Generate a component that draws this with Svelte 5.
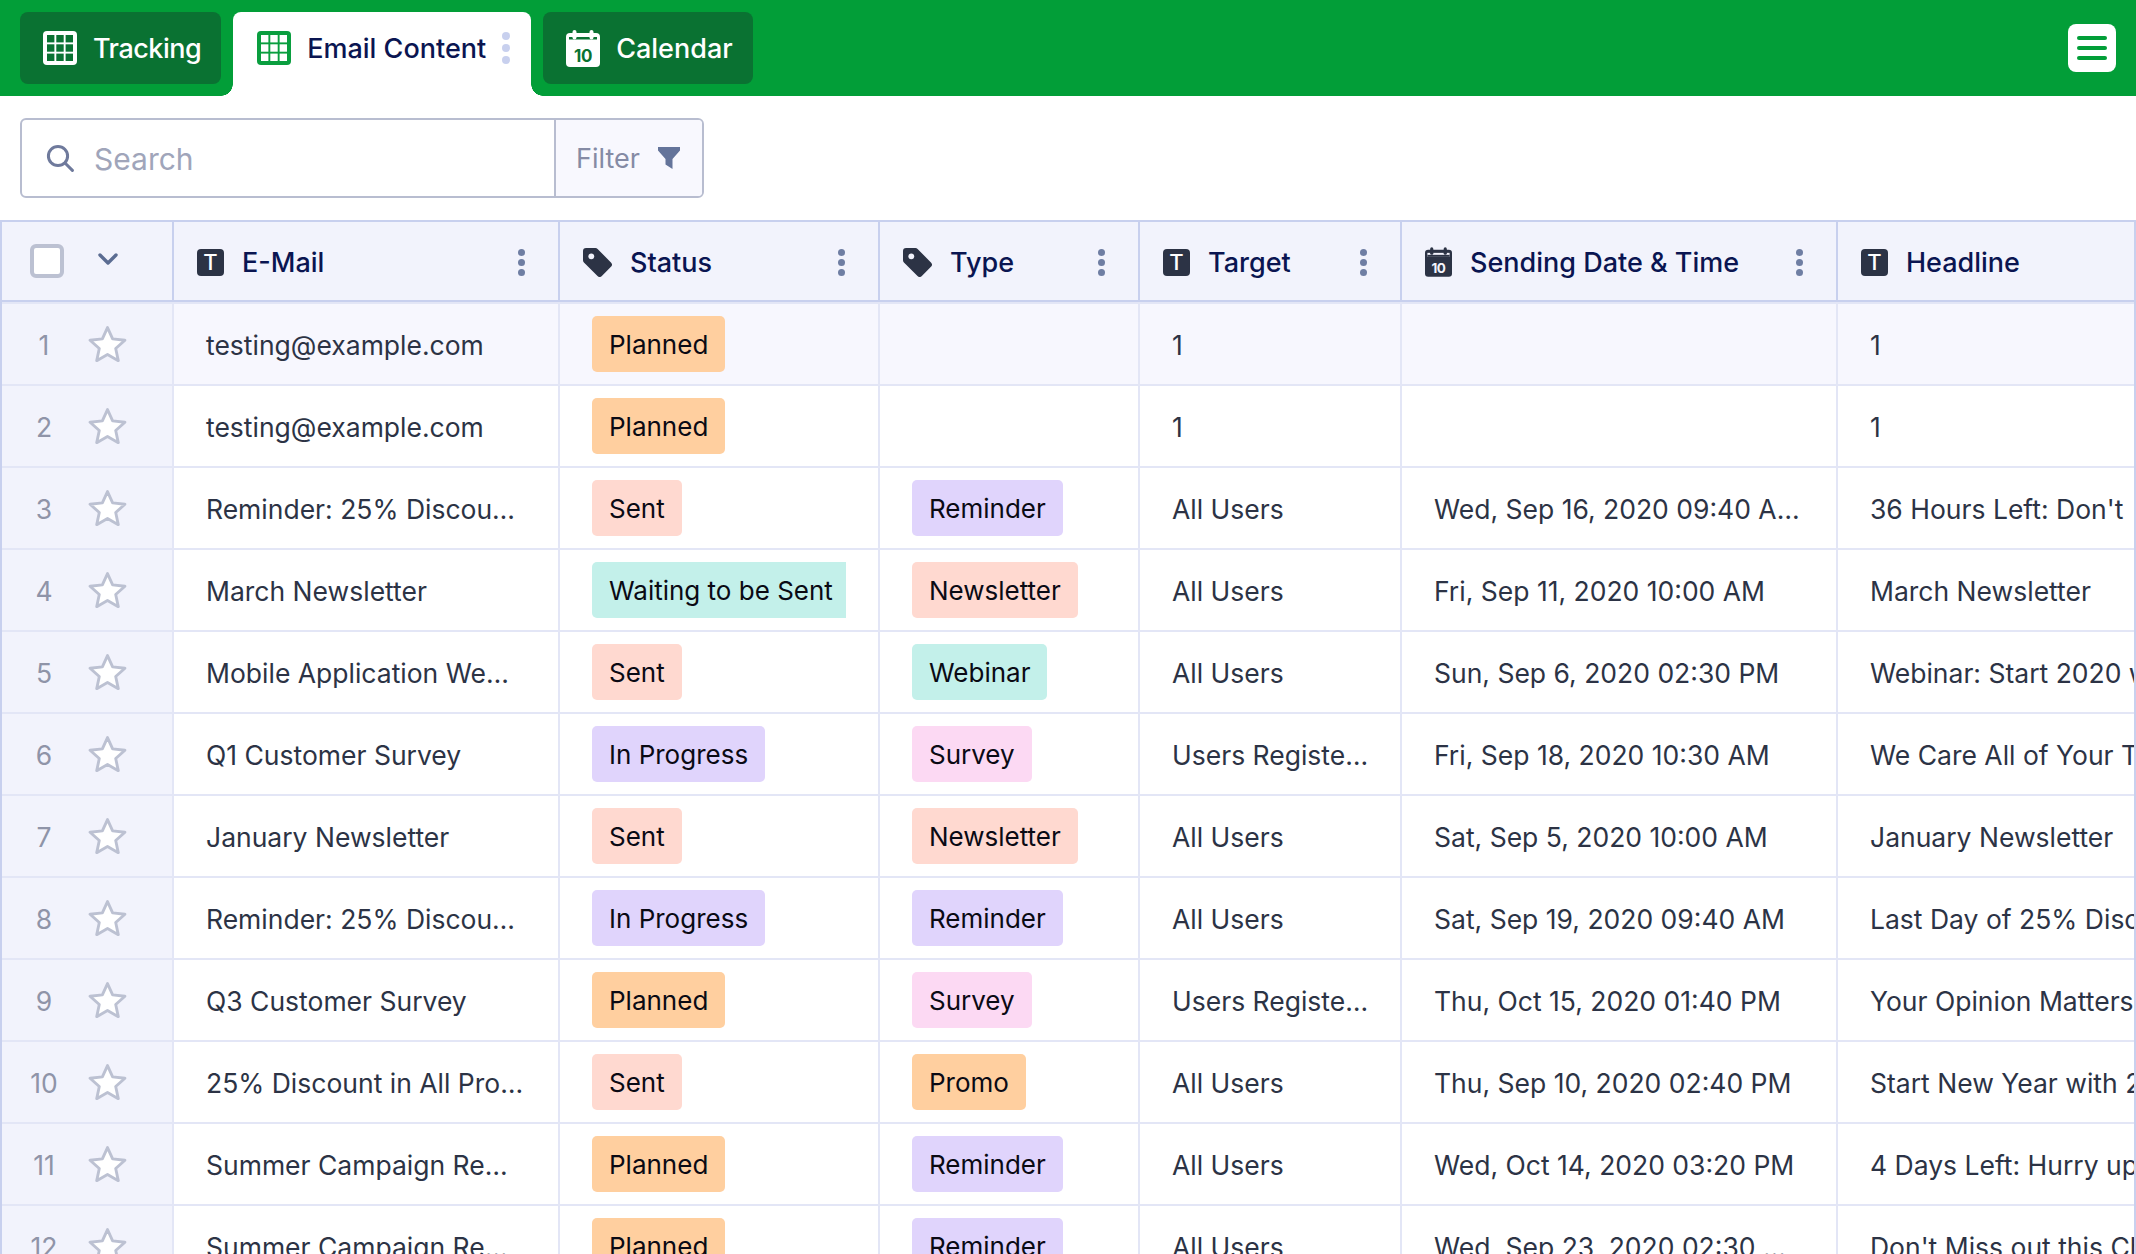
<script>
  const tone = {
    Planned: "orange",
    Promo: "orange",
    Sent: "salmon",
    Newsletter: "salmon",
    "Waiting to be Sent": "teal",
    Webinar: "teal",
    "In Progress": "violet",
    Reminder: "violet",
    Survey: "pink",
  };

  const columns = [
    { label: "E-Mail", icon: "text", menu: true },
    { label: "Status", icon: "tag", menu: true },
    { label: "Type", icon: "tag", menu: true },
    { label: "Target", icon: "text", menu: true },
    { label: "Sending Date & Time", icon: "date", menu: true },
    { label: "Headline", icon: "text", menu: false },
  ];

  const rows = [
    ["testing@example.com", "Planned", "", "1", "", "1"],
    ["testing@example.com", "Planned", "", "1", "", "1"],
    ["Reminder: 25% Discou…", "Sent", "Reminder", "All Users", "Wed, Sep 16, 2020 09:40 A…", "36 Hours Left: Don't"],
    ["March Newsletter", "Waiting to be Sent", "Newsletter", "All Users", "Fri, Sep 11, 2020 10:00 AM", "March Newsletter"],
    ["Mobile Application We…", "Sent", "Webinar", "All Users", "Sun, Sep 6, 2020 02:30 PM", "Webinar: Start 2020 with"],
    ["Q1 Customer Survey", "In Progress", "Survey", "Users Registe…", "Fri, Sep 18, 2020 10:30 AM", "We Care All of Your Time"],
    ["January Newsletter", "Sent", "Newsletter", "All Users", "Sat, Sep 5, 2020 10:00 AM", "January Newsletter"],
    ["Reminder: 25% Discou…", "In Progress", "Reminder", "All Users", "Sat, Sep 19, 2020 09:40 AM", "Last Day of 25% Discount"],
    ["Q3 Customer Survey", "Planned", "Survey", "Users Registe…", "Thu, Oct 15, 2020 01:40 PM", "Your Opinion Matters"],
    ["25% Discount in All Pro…", "Sent", "Promo", "All Users", "Thu, Sep 10, 2020 02:40 PM", "Start New Year with 25%"],
    ["Summer Campaign Re…", "Planned", "Reminder", "All Users", "Wed, Oct 14, 2020 03:20 PM", "4 Days Left: Hurry up"],
    ["Summer Campaign Re…", "Planned", "Reminder", "All Users", "Wed, Sep 23, 2020 02:30 …", "Don't Miss out this Chance"],
  ];
</script>

{#snippet gridIcon(fill, cut)}
  <svg class="tab-icon" viewBox="0 0 34 34" fill={cut}>
    <rect width="34" height="34" rx="4" fill={fill} />
    {#each [4, 13.3, 22.6] as y}
      {#each [4, 13.3, 22.6] as x}
        <rect {x} {y} width="7.4" height="7.4" />
      {/each}
    {/each}
  </svg>
{/snippet}

{#snippet dateIcon(fill, cut, cls)}
  <svg class={cls} viewBox="0 0 34 37">
    <rect y="3" width="34" height="34" rx="4" fill={fill} />
    <rect x="3" y="7" width="28" height="5" fill={cut} />
    <rect x="3" y="9.500" width="28" height="2.500" fill={fill} />
    <rect x="6.500" y="0" width="4" height="9.500" rx="2" fill={fill} />
    <rect x="23.500" y="0" width="4" height="9.500" rx="2" fill={fill} />
    <text x="17" y="32" text-anchor="middle" fill={cut} class="cal-num">10</text>
  </svg>
{/snippet}

{#snippet dots()}
  <span class="dots"><i></i><i></i><i></i></span>
{/snippet}

<div class="page">
  <nav class="topbar">
    <div class="tab">
      {@render gridIcon("#fff", "#0a7232")}
      <span class="tight">Tracking</span>
    </div>
    <div class="tab active">
      {@render gridIcon("#0a9e3f", "#fff")}
      <span>Email Content</span>
      <span class="tab-dots"><i></i><i></i><i></i></span>
    </div>
    <div class="tab cal">
      {@render dateIcon("#fff", "#0a7232", "tab-icon cal-icon")}
      <span>Calendar</span>
    </div>
    <button class="burger" aria-label="Menu"><i></i><i></i><i></i></button>
  </nav>

  <div class="toolbar">
    <div class="searchbox">
      <label class="search">
        <svg class="search-icon" viewBox="0 0 28 28" fill="none" stroke="#6f7a9c" stroke-width="3" stroke-linecap="round">
          <circle cx="12" cy="12" r="9.600" />
          <path d="M19 19l7.400 7.400" />
        </svg>
        <span>Search</span>
      </label>
      <div class="filter">
        <span>Filter</span>
        <svg viewBox="0 0 22 22" width="22" height="22" fill="#64749a">
          <path d="M0 0h22v3.500l-7.500 8.500v10l-7-4.500v-5.500l-7.500-8.500z" />
        </svg>
      </div>
    </div>
  </div>

  <div class="sheet">
    <div class="row head">
      <div class="cell lead">
        <span class="check"></span>
        <svg class="chev" viewBox="0 0 20 12" fill="none" stroke="#5b6c92" stroke-width="3.400" stroke-linecap="round" stroke-linejoin="round">
          <path d="M2 2l8 8 8-8" />
        </svg>
      </div>
      {#each columns as col}
        <div class="cell">
          {#if col.icon === "text"}
            <svg class="col-icon" viewBox="0 0 27 27">
              <rect width="27" height="27" rx="4" fill="#2c3345" />
              <text x="13.500" y="21" text-anchor="middle" class="t-glyph">T</text>
            </svg>
          {:else if col.icon === "tag"}
            <svg class="col-icon tag-icon" viewBox="0 0 28 28">
              <path fill="#2c3345" d="M3 0h9a3 3 0 0 1 2.100.9L27 14a3 3 0 0 1 0 4.200L18.200 27a3 3 0 0 1-4.200 0L.9 14a3 3 0 0 1-.9-2.100V3a3 3 0 0 1 3-3z" />
              <circle cx="8" cy="8" r="2.800" fill="#f2f3fc" />
            </svg>
          {:else}
            {@render dateIcon("#2c3345", "#f2f3fc", "col-icon date-icon")}
          {/if}
          <span class="label">{col.label}</span>
          {#if col.menu}
            {@render dots()}
          {/if}
        </div>
      {/each}
    </div>

    <div class="body">
      {#each rows as r, i}
        <div class="row" class:first={i === 0}>
          <div class="cell lead">
            <span class="num">{i + 1}</span>
            <svg class="star" viewBox="0 0 38 36" fill="#fff" stroke="#bcc1d2" stroke-width="2.800" stroke-linejoin="round">
              <path d="M19 2.500l5 11 12 1.300-9 8.100 2.500 11.800L19 28.700 8.500 34.700 11 22.900 2 14.800l12-1.300z" />
            </svg>
          </div>
          {#each r as value, c}
            <div class="cell">
              {#if (c === 1 || c === 2) && value}
                <span class="pill-clip"><span class="pill {tone[value]}">{value}</span></span>
              {:else}
                <span class="text">{value}</span>
              {/if}
            </div>
          {/each}
        </div>
      {/each}
    </div>
  </div>
</div>

<style>
  :global(body) {
    margin: 0;
    background: #fff;
  }
  .page {
    height: 100vh;
    overflow: hidden;
    font-family: Inter, "Noto Sans", sans-serif;
    color: #2c3345;
  }
  .topbar {
    display: flex;
    align-items: flex-start;
    gap: 12px;
    height: 96px;
    box-sizing: border-box;
    padding: 12px 20px 0;
    background: #029e38;
  }
  .tab {
    display: flex;
    align-items: center;
    height: 72px;
    box-sizing: border-box;
    padding: 0 20px 0 23px;
    gap: 16px;
    border-radius: 8px;
    background: #0a7232;
    color: #fff;
    font-size: 27px;
    font-weight: 500;
  }
  .tight {
    letter-spacing: -0.5px;
  }
  .tab-icon {
    width: 34px;
    height: 34px;
    flex: none;
  }
  .cal-icon {
    height: 37px;
  }
  .tab.active {
    position: relative;
    height: 84px;
    padding: 0 21px 12px 24px;
    border-radius: 8px 8px 0 0;
    background: #fff;
    color: #0a1551;
  }
  .tab.active::before,
  .tab.active::after {
    content: "";
    position: absolute;
    bottom: 0;
    width: 12px;
    height: 12px;
  }
  .tab.active::before {
    left: -12px;
    background: radial-gradient(circle at 0 0, #029e38 11.500px, #fff 12px);
  }
  .tab.active::after {
    right: -12px;
    background: radial-gradient(circle at 100% 0, #029e38 11.500px, #fff 12px);
  }
  .tab-dots {
    display: flex;
    flex-direction: column;
    gap: 4px;
  }
  .tab-dots i {
    width: 8px;
    height: 8px;
    border-radius: 50%;
    background: #c8d0ee;
  }
  .burger {
    display: flex;
    flex-direction: column;
    justify-content: center;
    align-items: center;
    gap: 6px;
    width: 48px;
    height: 48px;
    margin: 12px 0 0 auto;
    padding: 0;
    border: none;
    border-radius: 8px;
    background: #fff;
  }
  .burger i {
    width: 30px;
    height: 4px;
    border-radius: 2px;
    background: #029e38;
  }
  .toolbar {
    padding: 22px 20px;
  }
  .searchbox {
    display: flex;
    width: 684px;
    height: 80px;
    box-sizing: border-box;
    border: 2px solid #b8bdd0;
    border-radius: 6px;
    overflow: hidden;
  }
  .search {
    display: flex;
    align-items: center;
    flex: 1;
    gap: 20px;
    padding: 2px 0 0 24px;
    color: #a0a5ba;
    font-size: 30px;
  }
  .search-icon {
    width: 28px;
    height: 28px;
    margin-top: -2px;
  }
  .filter {
    display: flex;
    align-items: center;
    gap: 18px;
    width: 148px;
    box-sizing: border-box;
    padding-left: 20px;
    border-left: 2px solid #b8bdd0;
    background: #f8f8fe;
    color: #858ba5;
    font-size: 27px;
  }
  .sheet {
    border-top: 2px solid #c8d0ee;
    border-left: 2px solid #c8d0ee;
    border-right: 2px solid #c8d0ee;
  }
  .row {
    display: grid;
    grid-template-columns: 172px 386px 320px 260px 262px 436px 1fr;
    height: 82px;
    box-sizing: border-box;
    border-bottom: 2px solid #e3e6f6;
  }
  .head {
    height: 80px;
    border-bottom: 2px solid #c8d0ee;
    background: #f2f3fc;
  }
  .body {
    border-top: 2px solid #e3e6f6;
  }
  .first {
    background: #f7f7fe;
  }
  .cell {
    display: flex;
    align-items: center;
    box-sizing: border-box;
    min-width: 0;
    padding: 0 32px;
    border-right: 2px solid #e3e6f6;
    overflow: hidden;
    white-space: nowrap;
    font-size: 26.500px;
  }
  .cell:last-child {
    border-right: none;
    padding-right: 0;
  }
  .text {
    padding-top: 2px;
  }
  .head .cell {
    padding: 2px 33px 0 23px;
    border-right-color: #c8d0ee;
  }
  .lead {
    padding: 0;
    background: #f2f3fc;
  }
  .head .lead {
    padding: 0 0 0 28px;
  }
  .check {
    width: 34px;
    height: 34px;
    box-sizing: border-box;
    border: 4px solid #bcc1d2;
    border-radius: 6px;
    background: #fff;
    flex: none;
  }
  .chev {
    width: 20px;
    height: 12px;
    margin-left: 34px;
    margin-top: -4px;
  }
  .col-icon {
    width: 27px;
    height: 27px;
    flex: none;
  }
  .tag-icon {
    width: 29px;
    height: 29px;
  }
  .date-icon {
    height: 30px;
  }
  .label {
    margin-left: 18px;
    color: #0a1551;
    font-weight: 500;
    font-size: 27px;
  }
  .t-glyph {
    font-family: Inter, sans-serif;
    font-size: 22px;
    font-weight: 500;
    fill: #fff;
  }
  .cal-num {
    font-family: Inter, sans-serif;
    font-size: 17px;
    font-weight: 700;
    letter-spacing: -0.5px;
  }
  .dots {
    display: flex;
    flex-direction: column;
    gap: 3px;
    margin-left: auto;
  }
  .dots i {
    width: 7px;
    height: 7px;
    border-radius: 50%;
    background: #6f7ea3;
  }
  .num {
    width: 84px;
    padding-top: 2px;
    text-align: center;
    color: #8f94a8;
  }
  .star {
    width: 39px;
    height: 37px;
    margin: -2px 0 0 2px;
  }
  .pill-clip {
    display: block;
    max-width: 254px;
    overflow: hidden;
  }
  .pill {
    display: inline-block;
    height: 56px;
    box-sizing: border-box;
    padding: 2px 17px 0;
    line-height: 54px;
    border-radius: 5px;
    color: #0a0a14;
    font-size: 26px;
    vertical-align: top;
  }
  .orange {
    background: #ffcf9f;
  }
  .salmon {
    background: #ffd9d0;
  }
  .teal {
    background: #c3f0ea;
  }
  .violet {
    background: #e0d4fc;
  }
  .pink {
    background: #fcd9f3;
  }
</style>
